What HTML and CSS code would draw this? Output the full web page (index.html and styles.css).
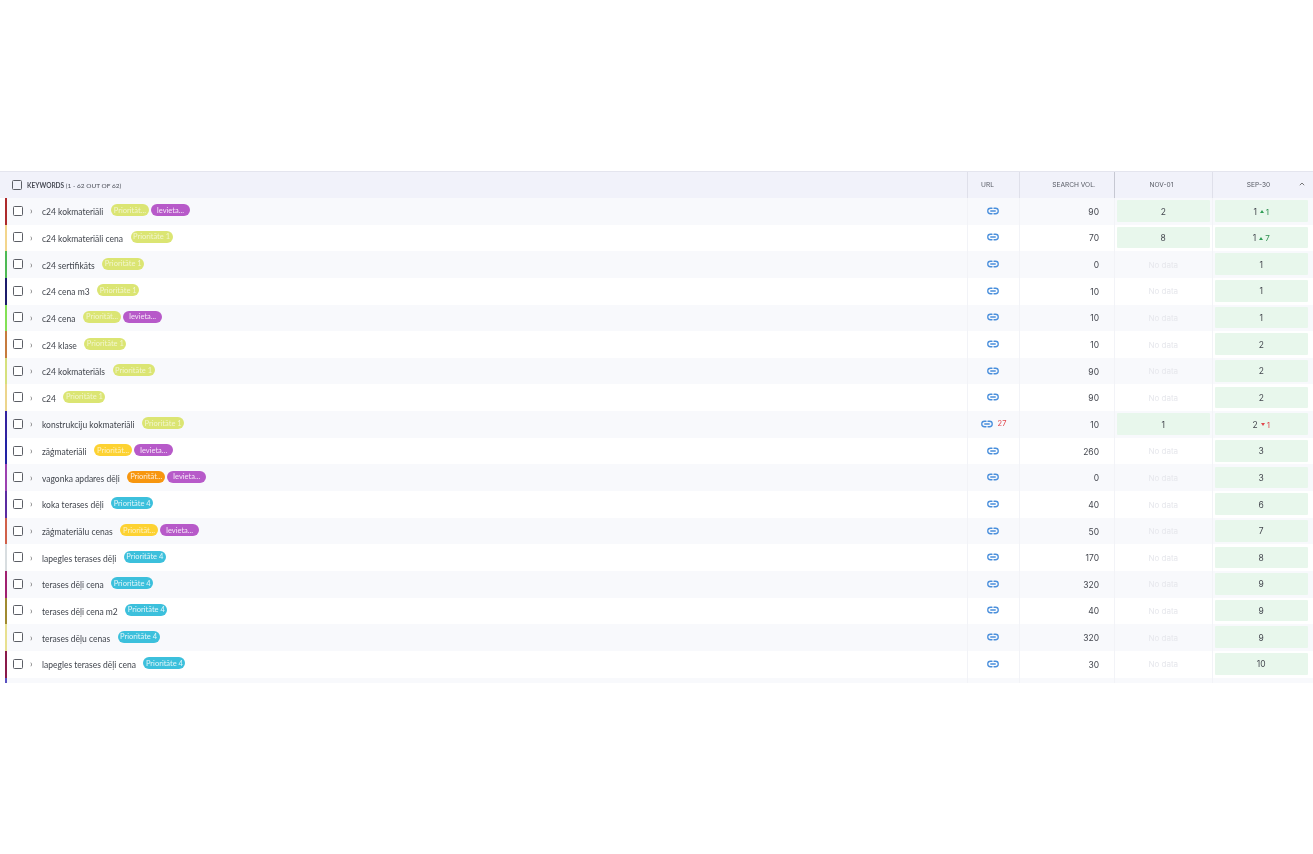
FILE: index.html
```html
<!DOCTYPE html>
<html lang="lv">
<head>
<meta charset="utf-8">
<title>Keywords</title>
<link rel="stylesheet" href="styles.css">
</head>
<body>
<svg class="defs" width="0" height="0" aria-hidden="true"><defs><symbol id="link" viewBox="0 0 24 24"><path d="M10 6.5H7a5.5 5.5 0 0 0 0 11h3M14 6.5h3a5.5 5.5 0 0 1 0 11h-3M7.5 12h9" fill="none" stroke="currentColor" stroke-width="2.6" stroke-linecap="round"/></symbol></defs></svg>
<main class="table">
  <div class="head">
    <div class="h-kw"><span class="box"></span><span class="h-label"><b>KEYWORDS</b> (1 - 62 OUT OF 62)</span></div>
    <div class="h-cell h-url">URL</div>
    <div class="h-cell h-vol">SEARCH VOL.</div>
    <div class="h-cell h-nov">NOV-01</div>
    <div class="h-cell h-sep">SEP-30<span class="sort"><svg width="6" height="4" viewBox="0 0 6 4"><path d="M.8 3.2 3 1l2.2 2.2" fill="none" stroke="#555" stroke-width=".8"/></svg></span></div>
  </div>
  <div class="row c1">
    <div class="kw"><span class="box"></span><span class="chev">›</span><span class="name">c24 kokmateriāli</span><span class="tag lime short">Prioritāt...</span><span class="tag purple short">Ievieta...</span></div>
    <div class="url"><svg class="ico"><use href="#link"/></svg></div><div class="vol">90</div>
    <div class="pos"><span class="good">2</span></div><div class="pos"><span class="good">1 <i class="up"></i><em class="gain">1</em></span></div>
  </div>
  <div class="row c2">
    <div class="kw"><span class="box"></span><span class="chev">›</span><span class="name">c24 kokmateriāli cena</span><span class="tag lime">Prioritāte 1</span></div>
    <div class="url"><svg class="ico"><use href="#link"/></svg></div><div class="vol">70</div>
    <div class="pos"><span class="good">8</span></div><div class="pos"><span class="good">1 <i class="up"></i><em class="gain">7</em></span></div>
  </div>
  <div class="row c3">
    <div class="kw"><span class="box"></span><span class="chev">›</span><span class="name">c24 sertifikāts</span><span class="tag lime">Prioritāte 1</span></div>
    <div class="url"><svg class="ico"><use href="#link"/></svg></div><div class="vol">0</div>
    <div class="pos"><span class="none">No data</span></div><div class="pos"><span class="good">1</span></div>
  </div>
  <div class="row c4">
    <div class="kw"><span class="box"></span><span class="chev">›</span><span class="name">c24 cena m3</span><span class="tag lime">Prioritāte 1</span></div>
    <div class="url"><svg class="ico"><use href="#link"/></svg></div><div class="vol">10</div>
    <div class="pos"><span class="none">No data</span></div><div class="pos"><span class="good">1</span></div>
  </div>
  <div class="row c5">
    <div class="kw"><span class="box"></span><span class="chev">›</span><span class="name">c24 cena</span><span class="tag lime short">Prioritāt...</span><span class="tag purple short">Ievieta...</span></div>
    <div class="url"><svg class="ico"><use href="#link"/></svg></div><div class="vol">10</div>
    <div class="pos"><span class="none">No data</span></div><div class="pos"><span class="good">1</span></div>
  </div>
  <div class="row c6">
    <div class="kw"><span class="box"></span><span class="chev">›</span><span class="name">c24 klase</span><span class="tag lime">Prioritāte 1</span></div>
    <div class="url"><svg class="ico"><use href="#link"/></svg></div><div class="vol">10</div>
    <div class="pos"><span class="none">No data</span></div><div class="pos"><span class="good">2</span></div>
  </div>
  <div class="row c7">
    <div class="kw"><span class="box"></span><span class="chev">›</span><span class="name">c24 kokmateriāls</span><span class="tag lime">Prioritāte 1</span></div>
    <div class="url"><svg class="ico"><use href="#link"/></svg></div><div class="vol">90</div>
    <div class="pos"><span class="none">No data</span></div><div class="pos"><span class="good">2</span></div>
  </div>
  <div class="row c8">
    <div class="kw"><span class="box"></span><span class="chev">›</span><span class="name">c24</span><span class="tag lime">Prioritāte 1</span></div>
    <div class="url"><svg class="ico"><use href="#link"/></svg></div><div class="vol">90</div>
    <div class="pos"><span class="none">No data</span></div><div class="pos"><span class="good">2</span></div>
  </div>
  <div class="row c9">
    <div class="kw"><span class="box"></span><span class="chev">›</span><span class="name">konstrukciju kokmateriāli</span><span class="tag lime">Prioritāte 1</span></div>
    <div class="url has-num"><svg class="ico"><use href="#link"/></svg><span class="urlnum">27</span></div><div class="vol">10</div>
    <div class="pos"><span class="good">1</span></div><div class="pos"><span class="good">2 <i class="down"></i><em class="loss">1</em></span></div>
  </div>
  <div class="row c10">
    <div class="kw"><span class="box"></span><span class="chev">›</span><span class="name">zāģmateriāli</span><span class="tag yellow short">Prioritāt...</span><span class="tag purple short">Ievieta...</span></div>
    <div class="url"><svg class="ico"><use href="#link"/></svg></div><div class="vol">260</div>
    <div class="pos"><span class="none">No data</span></div><div class="pos"><span class="good">3</span></div>
  </div>
  <div class="row c11">
    <div class="kw"><span class="box"></span><span class="chev">›</span><span class="name">vagonka apdares dēļi</span><span class="tag orange short">Prioritāt...</span><span class="tag purple short">Ievieta...</span></div>
    <div class="url"><svg class="ico"><use href="#link"/></svg></div><div class="vol">0</div>
    <div class="pos"><span class="none">No data</span></div><div class="pos"><span class="good">3</span></div>
  </div>
  <div class="row c12">
    <div class="kw"><span class="box"></span><span class="chev">›</span><span class="name">koka terases dēļi</span><span class="tag cyan">Prioritāte 4</span></div>
    <div class="url"><svg class="ico"><use href="#link"/></svg></div><div class="vol">40</div>
    <div class="pos"><span class="none">No data</span></div><div class="pos"><span class="good">6</span></div>
  </div>
  <div class="row c13">
    <div class="kw"><span class="box"></span><span class="chev">›</span><span class="name">zāģmateriālu cenas</span><span class="tag yellow short">Prioritāt...</span><span class="tag purple short">Ievieta...</span></div>
    <div class="url"><svg class="ico"><use href="#link"/></svg></div><div class="vol">50</div>
    <div class="pos"><span class="none">No data</span></div><div class="pos"><span class="good">7</span></div>
  </div>
  <div class="row c14">
    <div class="kw"><span class="box"></span><span class="chev">›</span><span class="name">lapegles terases dēļi</span><span class="tag cyan">Prioritāte 4</span></div>
    <div class="url"><svg class="ico"><use href="#link"/></svg></div><div class="vol">170</div>
    <div class="pos"><span class="none">No data</span></div><div class="pos"><span class="good">8</span></div>
  </div>
  <div class="row c15">
    <div class="kw"><span class="box"></span><span class="chev">›</span><span class="name">terases dēļi cena</span><span class="tag cyan">Prioritāte 4</span></div>
    <div class="url"><svg class="ico"><use href="#link"/></svg></div><div class="vol">320</div>
    <div class="pos"><span class="none">No data</span></div><div class="pos"><span class="good">9</span></div>
  </div>
  <div class="row c16">
    <div class="kw"><span class="box"></span><span class="chev">›</span><span class="name">terases dēļi cena m2</span><span class="tag cyan">Prioritāte 4</span></div>
    <div class="url"><svg class="ico"><use href="#link"/></svg></div><div class="vol">40</div>
    <div class="pos"><span class="none">No data</span></div><div class="pos"><span class="good">9</span></div>
  </div>
  <div class="row c17">
    <div class="kw"><span class="box"></span><span class="chev">›</span><span class="name">terases dēļu cenas</span><span class="tag cyan">Prioritāte 4</span></div>
    <div class="url"><svg class="ico"><use href="#link"/></svg></div><div class="vol">320</div>
    <div class="pos"><span class="none">No data</span></div><div class="pos"><span class="good">9</span></div>
  </div>
  <div class="row c18">
    <div class="kw"><span class="box"></span><span class="chev">›</span><span class="name">lapegles terases dēļi cena</span><span class="tag cyan">Prioritāte 4</span></div>
    <div class="url"><svg class="ico"><use href="#link"/></svg></div><div class="vol">30</div>
    <div class="pos"><span class="none">No data</span></div><div class="pos"><span class="good">10</span></div>
  </div>
  <div class="row c19"><div class="kw"></div><div class="url"></div><div class="vol"></div><div class="pos"></div><div class="pos"></div></div>
</main>
</body>
</html>
```
FILE: styles.css
```css
* { box-sizing: border-box; }
html, body { margin: 0; background: #fff; }
body { padding-top: 171px; height: 854px; overflow: hidden; font-family: "Lato", "Liberation Sans", sans-serif; color: #3c4048; }
.defs { position: absolute; }
.table { height: 512px; overflow: hidden; border-top: 1px solid #e4e5ee; filter: blur(.3px); }
.head { display: grid; grid-template-columns: 967px 52px 95px 98px 101px; height: 26px; background: #f1f2fa; }
.h-kw { display: flex; align-items: center; padding-left: 12px; }
.h-label { margin-left: 5px; font-size: 6.5px; color: #4a4d57; white-space: nowrap; }
.h-label b { font-weight: 700; }
.h-cell { display: flex; align-items: center; justify-content: center; position: relative; border-left: 1px solid #dfe0ea; font: 6.6px "Inter", sans-serif; color: #555862; }
.h-url { padding-right: 12px; }
.h-vol { padding-left: 14px; }
.h-nov { border-left-color: #c6c8d2; padding-right: 4px; }
.h-sep { padding-right: 9px; }
.sort { position: absolute; right: 8px; top: 10px; line-height: 0; }
.box { flex: none; width: 10px; height: 10px; border: 1.5px solid #5c5f66; border-radius: 1.5px; background: #fff; }
.h-kw .box { background: transparent; }
.row { display: grid; grid-template-columns: 960px 52px 95px 98px 101px; height: 26.65px; margin-left: 5px; border-left: 2px solid; background: #fff; }
.row:nth-child(even) { background: #f8f9fc; }
.kw { display: flex; align-items: center; padding: 0 0 1px 6px; min-width: 0; }
.chev { width: 12px; margin-left: 7px; font-size: 9px; line-height: 9px; color: #666; }
.name { margin: 3px 7.5px 0 0; font-size: 8.5px; color: #41454d; white-space: nowrap; }
.tag { display: inline-flex; align-items: center; justify-content: center; height: 12px; width: 42px; margin: -1px 2px 0 0; border-radius: 6px; font-size: 7.5px; color: rgba(255, 255, 255, .85); white-space: nowrap; }
.short { width: 38px; }
.purple.short { width: 39px; }
.lime { background: #dbe573; color: rgba(255, 255, 255, .65); }
.purple { background: #b75ac9; }
.yellow { background: #fdd232; color: rgba(255, 255, 255, .7); }
.orange { background: #f7960f; }
.cyan { background: #3cc0dc; }
.url, .vol, .pos { border-left: 1px solid #f2f3f7; display: flex; align-items: center; font: 8.5px "Inter", sans-serif; color: #44474f; }
.url { justify-content: center; padding: 0 2px 1px 0; color: #4a8fdc; }
.ico { width: 12px; height: 12px; color: #4a8fdc; }
.has-num { gap: 5px; padding-right: 0; }
.urlnum { color: #e0474c; font-size: 7.5px; }
.vol { justify-content: flex-end; padding: 1px 15px 0 0; }
.pos { justify-content: center; padding: 2.2px 2.5px 2.8px 2px; }
.pos:last-child { padding-right: 5.5px; }
.good, .none { flex: 1; display: flex; align-items: center; justify-content: center; height: 100%; padding-top: 1px; }
.good { gap: 2px; background: #e8f7ec; border-radius: 1px; }
.none { color: #e6e7ec; font-size: 8px; }
.up, .down { width: 0; height: 0; border-left: 2.5px solid transparent; border-right: 2.5px solid transparent; margin-left: 1px; }
.up { border-bottom: 3px solid #2f9e55; }
.down { border-top: 3px solid #e0474c; }
em { font-style: normal; font-size: 8px; }
.gain { color: #2f8f50; }
.loss { color: #e0474c; }
.c1 { border-left-color: #ad2a2c; }
.c2 { border-left-color: #f3d58c; }
.c3 { border-left-color: #4eb954; }
.c4 { border-left-color: #1c1c6c; }
.c5 { border-left-color: #82e055; }
.c6 { border-left-color: #c67b3d; }
.c7 { border-left-color: #d6e07c; }
.c8 { border-left-color: #ecd58c; }
.c9 { border-left-color: #3122a0; }
.c10 { border-left-color: #2222a4; }
.c11 { border-left-color: #9b40b0; }
.c12 { border-left-color: #5b2ba0; }
.c13 { border-left-color: #d0604a; }
.c14 { border-left-color: #d8dde0; }
.c15 { border-left-color: #a02070; }
.c16 { border-left-color: #a08a30; }
.c17 { border-left-color: #e8e090; }
.c18 { border-left-color: #8a1a4a; }
.c19 { border-left-color: #5a50c0; }
```
